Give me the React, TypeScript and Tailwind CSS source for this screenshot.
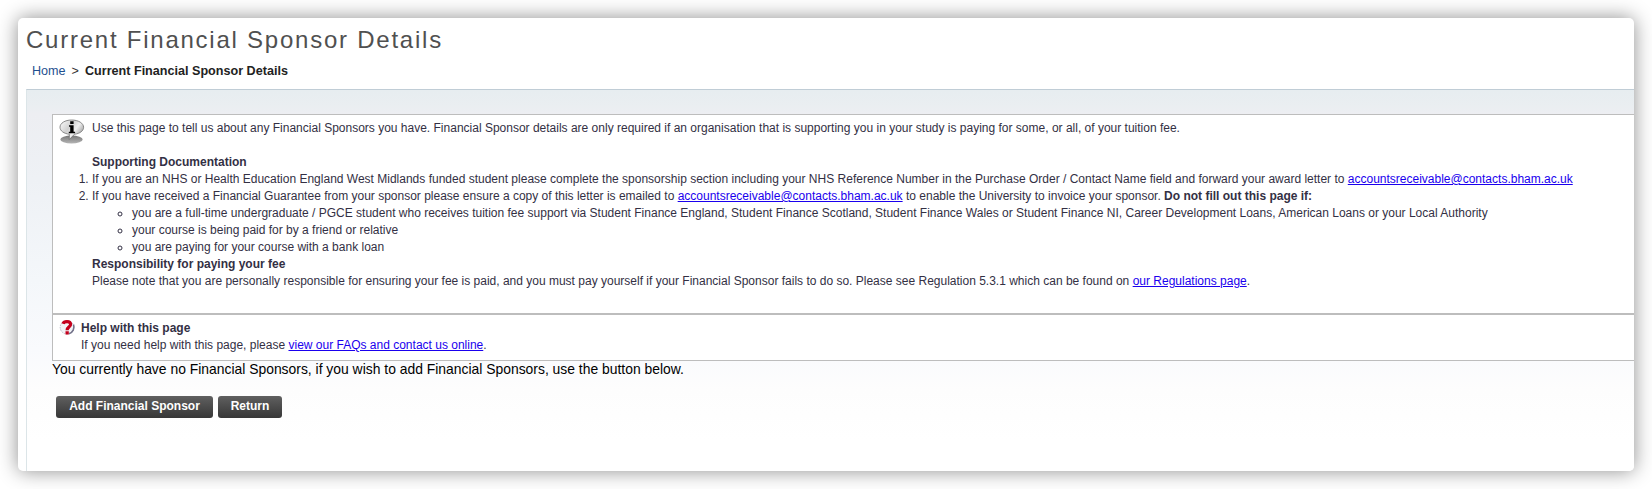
import type { ReactNode } from "react";

function MailLink({ children }: { children: ReactNode }) {
  return (
    <a href="#" className="text-[#1a00ee] underline">
      {children}
    </a>
  );
}

function InfoIcon() {
  return (
    <svg width="26" height="26" viewBox="0 0 26 26" className="block">
      <defs>
        <linearGradient id="bubble" x1="0" y1="0" x2="1" y2="0.6">
          <stop offset="0" stopColor="#ffffff" />
          <stop offset="0.45" stopColor="#d0d0d0" />
          <stop offset="0.7" stopColor="#f0f0f0" />
          <stop offset="1" stopColor="#a0a0a0" />
        </linearGradient>
        <linearGradient id="shade" x1="0" y1="0" x2="0" y2="1">
          <stop offset="0" stopColor="#777777" />
          <stop offset="1" stopColor="#b5b5b5" />
        </linearGradient>
      </defs>
      <ellipse cx="12.5" cy="20.5" rx="11.2" ry="4" fill="url(#shade)" />
      <path
        d="M12.500 1C6 1 1 4.200 1 8.200c0 3.700 4 6.500 9.300 7v5.300l5.300-5.300c5.200-.6 9-3.300 9-6.900C24.600 4.200 19.500 1 12.500 1z"
        fill="url(#bubble)"
        stroke="#6e6e6e"
        strokeWidth="0.8"
      />
      <path d="M11.200 2.300h3.400v2.600h-3.400zM10 6.300h4.600v6.500h1.500v1.500H9.800v-1.500h1.400V7.700H10z" fill="#000000" />
    </svg>
  );
}

function HelpIcon() {
  return (
    <svg width="17" height="17" viewBox="0 0 17 17" className="block">
      <circle cx="8" cy="8.300" r="6.800" fill="#f1f2f6" stroke="#b9b9c6" strokeWidth="1" strokeDasharray="1.500 1" />
      <path d="M14.500 5.500a7 7 0 0 1-4.500 9.200" fill="none" stroke="#73738a" strokeWidth="1.600" />
      <path
        d="M4 4.800C5 2.200 11.200 1.700 11.600 5.200c.3 2.500-3.400 2.700-3.500 6"
        fill="none"
        stroke="#c4001c"
        strokeWidth="3.200"
      />
      <path d="M6.500 12.300h3.300v3.100H6.500z" fill="#c4001c" />
    </svg>
  );
}

function ActionButton({ width, children }: { width: string; children: ReactNode }) {
  return (
    <button
      className={`${width} h-[22px] rounded-[3px] bg-linear-to-b from-[#606060] to-[#373737] pb-[2px] text-[12px] leading-[18px] font-bold text-white`}
    >
      {children}
    </button>
  );
}

export default function App() {
  return (
    <div className="h-[489px] overflow-hidden bg-white p-[18px] font-['Liberation_Sans',Arial,sans-serif] whitespace-nowrap">
      <main className="flex h-[453px] w-[1616px] flex-col overflow-hidden rounded-[5px] bg-white pl-2 shadow-[0_0_20px_rgba(0,0,0,0.45)]">
        <h1 className="pt-[7px] text-[24px] leading-[30px] tracking-[1.760px] text-[#505050]">
          Current Financial Sponsor Details
        </h1>
        <nav className="flex pt-[8px] pl-[6px] text-[12.600px] leading-[16px]">
          <a href="#" className="text-[#1f4f8f]">Home</a>
          <span className="px-[6px] text-[#333333]">&gt;</span>
          <b className="text-[#222222]">Current Financial Sponsor Details</b>
        </nav>
        <section className="mt-[10px] flex-1 border-t border-l border-t-[#c0cdd6] border-l-[#dce5e8] bg-[linear-gradient(to_bottom,#e7edf0_0px,#eaeef1_16px,#edeef2_24px,#eef1f5_90px,#f4f7fa_190px,#f9fafd_260px,#fdfdfd_300px,#ffffff_350px)] pt-[24px] pl-[25px]">
          <div className="flex h-[200px] border border-r-0 border-[#bdbdbd] bg-white pt-[4px] text-[12px] leading-[17px] text-[#333044]">
            <div className="w-[39px] pl-[6px]">
              <InfoIcon />
            </div>
            <div className="pt-px">
              <p>
                Use this page to tell us about any Financial Sponsors you have. Financial Sponsor details are only
                required if an organisation that is supporting you in your study is paying for some, or all, of your
                tuition fee.
              </p>
              <h2 className="mt-[17px] font-bold">Supporting Documentation</h2>
              <ol className="list-decimal">
                <li>
                  If you are an NHS or Health Education England West Midlands funded student please complete the
                  sponsorship section including your NHS Reference Number in the Purchase Order / Contact Name field
                  and forward your award letter to <MailLink>accountsreceivable@contacts.bham.ac.uk</MailLink>
                </li>
                <li>
                  If you have received a Financial Guarantee from your sponsor please ensure a copy of this letter is
                  emailed to <MailLink>accountsreceivable@contacts.bham.ac.uk</MailLink> to enable the University to
                  invoice your sponsor. <b>Do not fill out this page if:</b>
                  <ul className="list-[circle] pl-[40px]">
                    <li>
                      you are a full-time undergraduate / PGCE student who receives tuition fee support via Student
                      Finance England, Student Finance Scotland, Student Finance Wales or Student Finance NI, Career
                      Development Loans, American Loans or your Local Authority
                    </li>
                    <li>your course is being paid for by a friend or relative</li>
                    <li>you are paying for your course with a bank loan</li>
                  </ul>
                </li>
              </ol>
              <h2 className="font-bold">Responsibility for paying your fee</h2>
              <p>
                Please note that you are personally responsible for ensuring your fee is paid, and you must pay
                yourself if your Financial Sponsor fails to do so. Please see Regulation 5.3.1 which can be found on{" "}
                <MailLink>our Regulations page</MailLink>.
              </p>
            </div>
          </div>
          <div className="flex h-[47px] border border-r-0 border-[#bdbdbd] bg-white pt-[4px] text-[12px] leading-[17px] text-[#333044]">
            <div className="w-[28px] pl-[6px]">
              <HelpIcon />
            </div>
            <div className="pt-px">
              <h2 className="font-bold">Help with this page</h2>
              <p>
                If you need help with this page, please <MailLink>view our FAQs and contact us online</MailLink>.
              </p>
            </div>
          </div>
          <p className="text-[13.900px] leading-[16px] text-black">
            You currently have no Financial Sponsors, if you wish to add Financial Sponsors, use the button below.
          </p>
          <div className="mt-[19px] flex gap-[5px] pl-[4px]">
            <ActionButton width="w-[157px]">Add Financial Sponsor</ActionButton>
            <ActionButton width="w-[64px]">Return</ActionButton>
          </div>
        </section>
      </main>
    </div>
  );
}
